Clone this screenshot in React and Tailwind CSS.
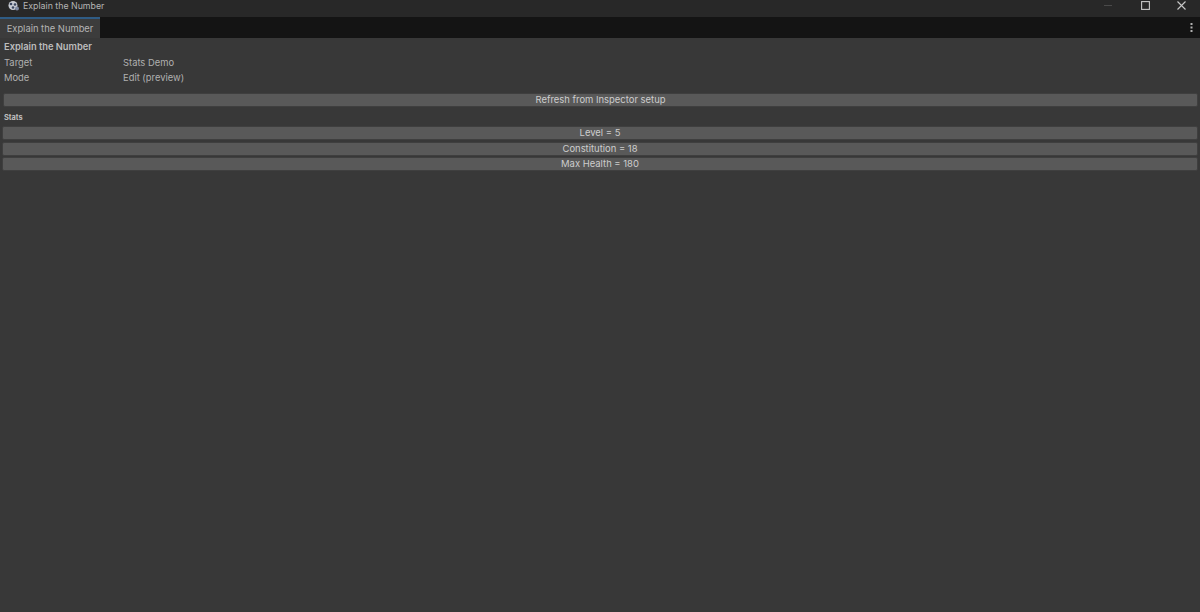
const font = { fontFamily: 'Inter, "Noto Sans", sans-serif' };

function StatButton({ children, mx = "mx-[2px]" }) {
  return (
    <div className={`${mx} h-[14px] flex items-center justify-center bg-[#595959] border border-[#3f3f3f] rounded-[2px] text-[9.45px] text-[#cdcdcd] leading-none`}>
      {children}
    </div>
  );
}

export default function App() {
  return (
    <div className="w-[1200px] h-[612px] overflow-hidden flex flex-col bg-[#383838]" style={font}>
      <div className="h-[12px] shrink-0 flex items-center justify-between bg-[#282828] relative">
        <div className="flex items-center pl-[7px] gap-[3px]">
          <svg width="13" height="11" viewBox="0 0 13 11" className="shrink-0">
            <circle cx="6" cy="4.5" r="4.5" fill="#c8ccd4" />
            <circle cx="4" cy="3" r="1.3" fill="#3a4660" />
            <circle cx="8" cy="3.5" r="1.3" fill="#3a4660" />
            <circle cx="6" cy="6.5" r="1.3" fill="#3a4660" />
            <circle cx="10" cy="7.5" r="2" fill="#7f8aa3" />
          </svg>
          <span className="text-[8.8px] leading-none text-[#b4b4b4]">Explain the Number</span>
        </div>
        <div className="flex items-center h-[11px] self-start pr-[14px] text-[#c8c8c8]">
          <span className="w-[8px] h-px bg-[#4a4a4a] mr-[29px]" />
          <svg width="9" height="9" viewBox="0 0 9 9" className="mr-[27px]">
            <rect x="0.6" y="0.6" width="7.8" height="7.8" fill="none" stroke="#c8c8c8" strokeWidth="1.1" />
          </svg>
          <svg width="9" height="9" viewBox="0 0 9 9">
            <path d="M0.5 0.5L8.5 8.5M8.5 0.5L0.5 8.5" stroke="#c8c8c8" strokeWidth="1.1" fill="none" />
          </svg>
        </div>
      </div>
      <div className="h-[5px] shrink-0 bg-[#282828]" />
      <div className="h-[21px] shrink-0 flex justify-between items-stretch bg-[#141414]">
        <div className="w-[100px] bg-[#3c3c3c] border-t-2 border-[#2f5c85] flex items-center justify-center text-[9.4px] text-[#b4b4b4] leading-none">
          Explain the Number
        </div>
        <svg width="3" height="9" viewBox="0 0 3 9" className="self-center mr-[7px]">
          <rect x="0.5" y="0" width="2" height="2" fill="#b0b0b0" />
          <rect x="0.5" y="3.5" width="2" height="2" fill="#b0b0b0" />
          <rect x="0.5" y="7" width="2" height="2" fill="#b0b0b0" />
        </svg>
      </div>
      <div className="flex-1 flex flex-col">
        <div className="h-[17px] pl-[4px] flex items-center text-[9.3px] font-semibold text-[#bdbdbd] leading-none">Explain the Number</div>
        <div className="h-[15px] pl-[4px] flex items-center text-[9.4px] text-[#b0b0b0] leading-none">
          <span className="w-[119px]">Target</span>
          <span>Stats Demo</span>
        </div>
        <div className="h-[16px] pl-[4px] flex items-center text-[9.4px] text-[#b0b0b0] leading-none">
          <span className="w-[119px]">Mode</span>
          <span>Edit (preview)</span>
        </div>
        <div className="mt-[7px]">
          <StatButton mx="ml-[3px] mr-[2px]">Refresh from Inspector setup</StatButton>
        </div>
        <div className="h-[12px] mt-[5px] mb-[2px] pl-[4px] flex items-center text-[7.4px] font-bold text-[#bdbdbd] leading-none">Stats</div>
        <div className="flex flex-col gap-[1.6px]">
          <StatButton>Level = 5</StatButton>
          <StatButton>Constitution = 18</StatButton>
          <StatButton>Max Health = 180</StatButton>
        </div>
      </div>
    </div>
  );
}
